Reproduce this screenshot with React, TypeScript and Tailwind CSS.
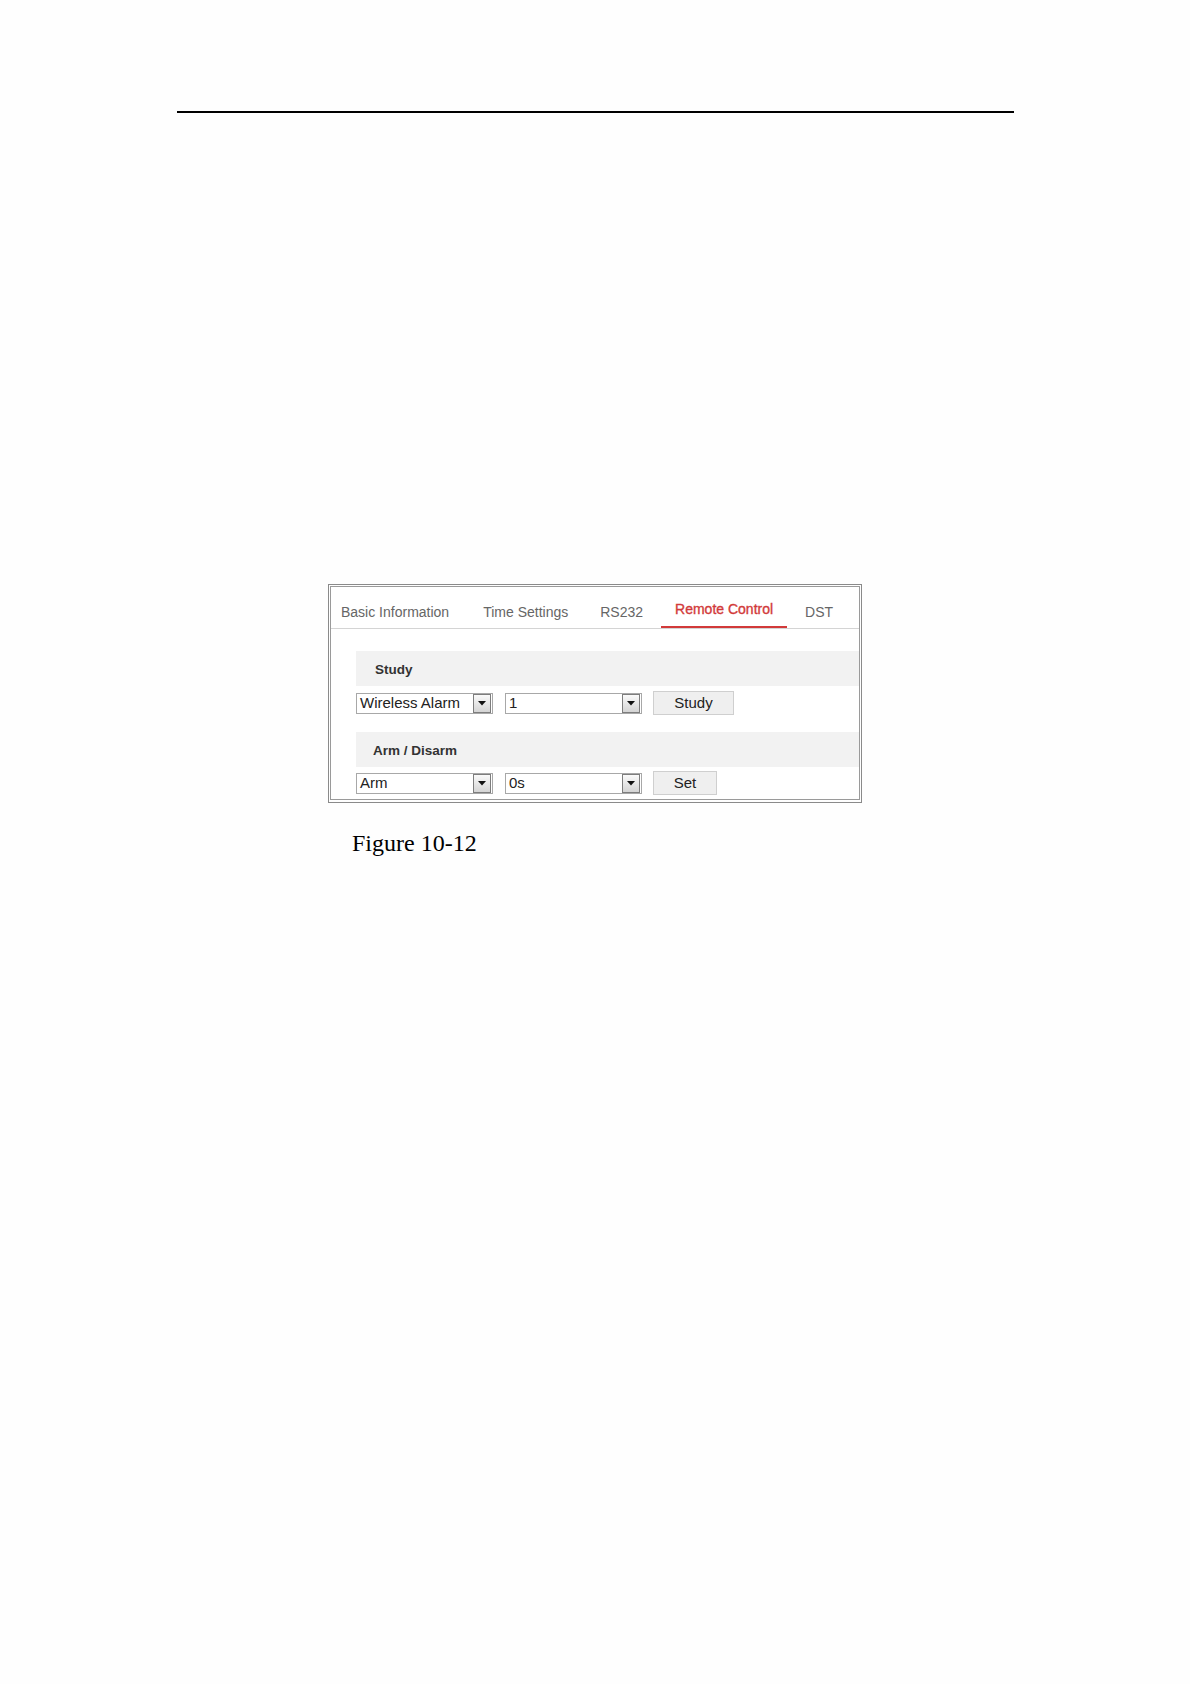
import React from "react";

const sans = "font-['Liberation_Sans',Arial,sans-serif]";

function Arrow() {
  return (
    <div className="w-[18px] h-[19px] mr-[1px] border border-[#7d7d7d] bg-gradient-to-b from-[#fafafa] to-[#d4d4d4] flex items-center justify-center">
      <svg width="8" height="5" viewBox="0 0 8 5">
        <polygon points="0,0 8,0 4,4.5" fill="#111" />
      </svg>
    </div>
  );
}

function Select({ value }: { value: string }) {
  return (
    <div className="w-[137px] h-[21px] border border-[#a8a8a8] bg-white flex items-center justify-between">
      <span className="pl-[3px] text-[15px] leading-[18px] text-[#222]">{value}</span>
      <Arrow />
    </div>
  );
}

function Btn({ label, w }: { label: string; w: string }) {
  return (
    <div
      className={`${w} h-[24px] ml-[11px] border border-[#cfcfcf] bg-[#efefef] flex items-center justify-center text-[15px] leading-[18px] text-[#222]`}
    >
      {label}
    </div>
  );
}

export default function App() {
  return (
    <div className={`w-[1190px] h-[1684px] bg-[#fefefe] pt-[111px] ${sans}`}>
      <div className="ml-[177px] w-[837px] h-[2px] bg-black" />

      <div className="ml-[328px] mt-[471px] w-[534px] border border-[#8a8a8a] pt-[1px] px-[1px] pb-[2px]">
        <div className="border border-[#9a9a9a] bg-white">
          {/* Tabs */}
          <div className="flex gap-[4px] border-b border-[#d4d4d4] h-[42px]">
            <div className="pl-[10px] pr-[14px] pt-[17px] pb-[6px] leading-[16px] text-[14px] text-[#666] border-b-2 border-transparent">
              Basic Information
            </div>
            <div className="px-[14px] pt-[17px] pb-[6px] leading-[16px] text-[14px] text-[#666] border-b-2 border-transparent ml-[2px]">
              Time Settings
            </div>
            <div className="px-[14px] pt-[17px] pb-[6px] leading-[16px] text-[14px] text-[#666] border-b-2 border-transparent">
              RS232
            </div>
            <div className="px-[14px] pt-[14px] pb-[9px] leading-[16px] text-[14px] text-[#d23a3a] border-b-2 border-[#d23a3a] [-webkit-text-stroke:0.35px_#d23a3a]">
              Remote Control
            </div>
            <div className="px-[14px] pt-[17px] pb-[6px] leading-[16px] text-[14px] text-[#666] border-b-2 border-transparent">
              DST
            </div>
          </div>

          {/* Content */}
          <div className="pl-[25px] pt-[22px]">
            <div className="h-[35px] bg-[#f2f2f2] pl-[19px] pt-[11px] text-[13.5px] leading-[16px] font-bold text-[#333]">
              Study
            </div>
            <div className="h-[34px] flex items-center">
              <Select value="Wireless Alarm" />
              <div className="ml-[12px]">
                <Select value="1" />
              </div>
              <Btn label="Study" w="w-[81px]" />
            </div>
            <div className="mt-[12px] h-[35px] bg-[#f2f2f2] pl-[17px] pt-[11px] text-[13.5px] leading-[16px] font-bold text-[#333]">
              Arm / Disarm
            </div>
            <div className="h-[32px] flex items-center">
              <Select value="Arm" />
              <div className="ml-[12px]">
                <Select value="0s" />
              </div>
              <Btn label="Set" w="w-[64px]" />
            </div>
          </div>
        </div>
      </div>

      <div className="ml-[352px] mt-[26px] font-['Liberation_Serif','Times_New_Roman',serif] text-[24px] leading-[28px] text-black">
        Figure 10-12
      </div>
    </div>
  );
}
